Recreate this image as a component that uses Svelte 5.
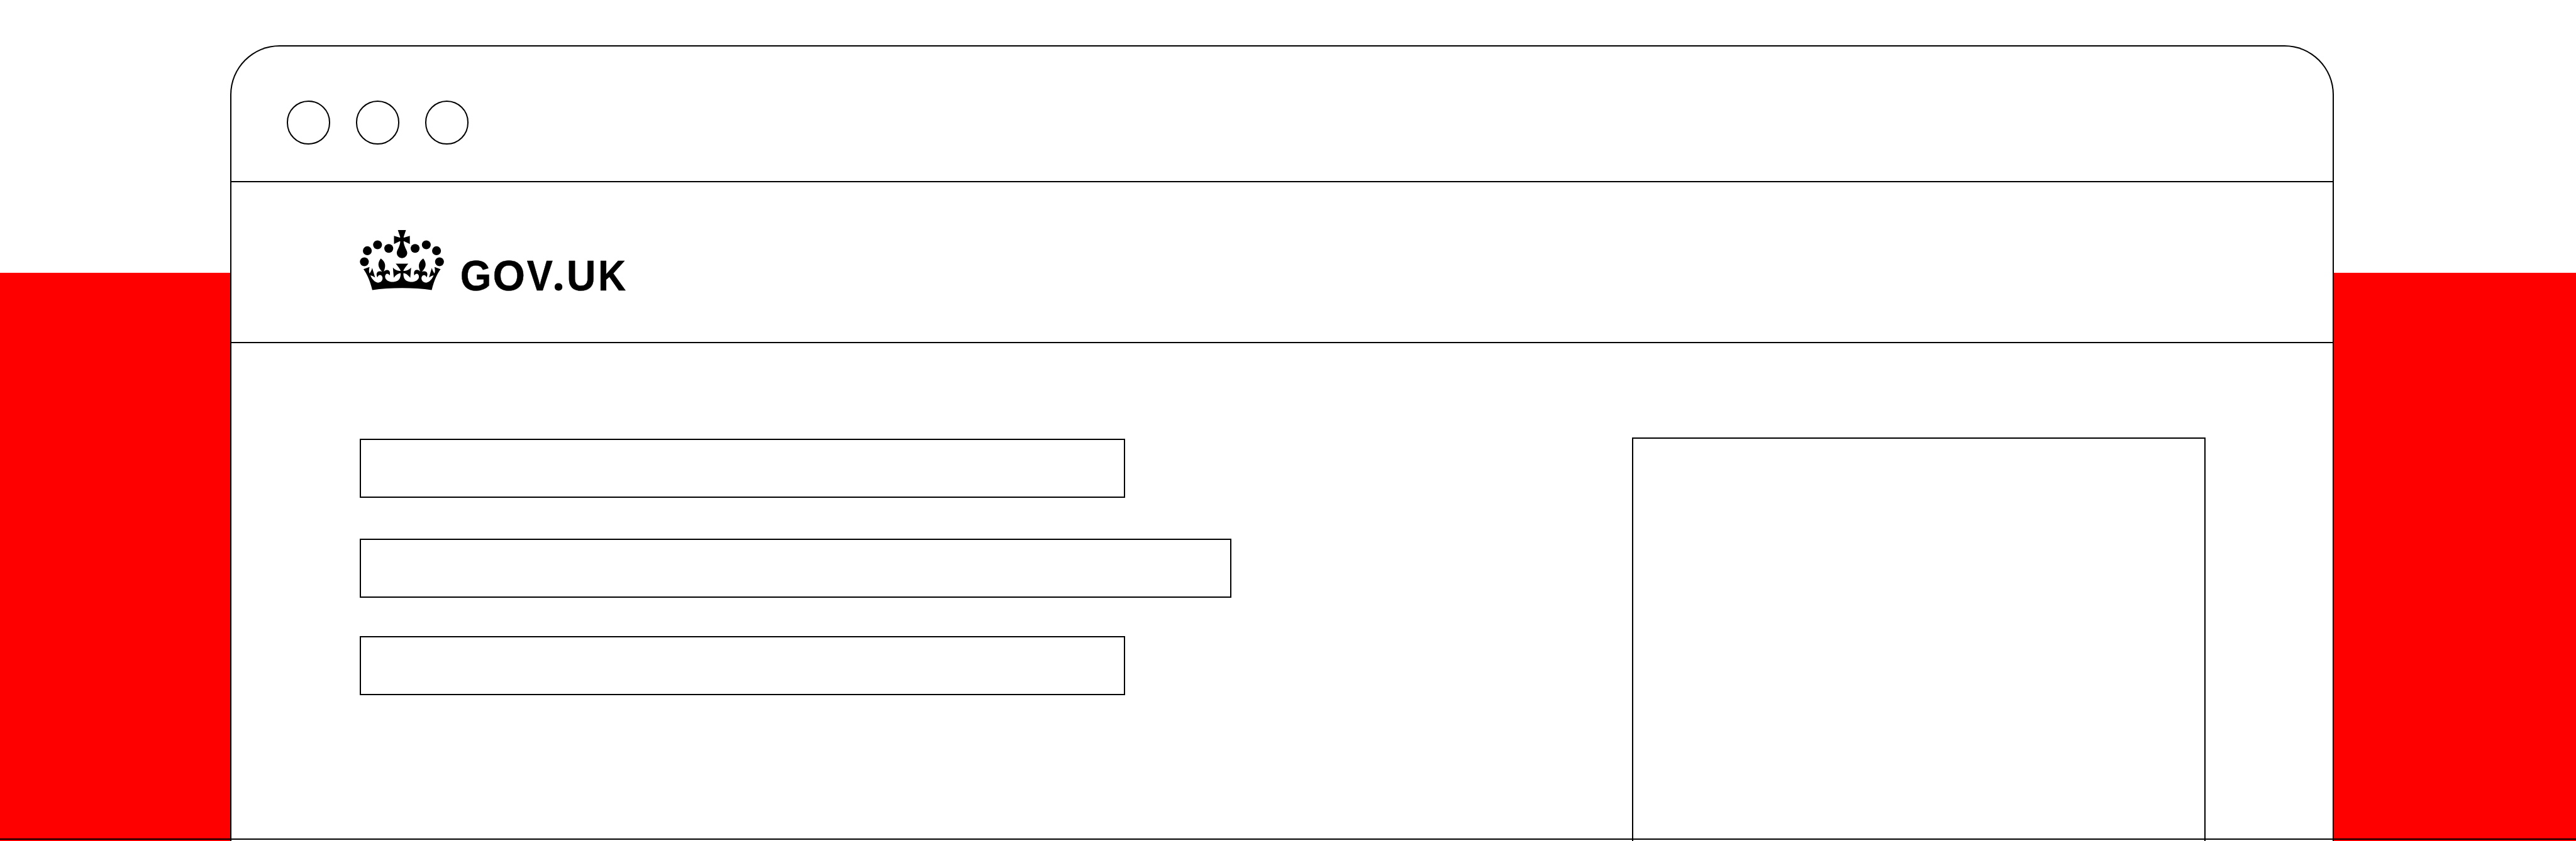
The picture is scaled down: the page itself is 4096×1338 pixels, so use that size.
<script>
  const dots = [0, 1, 2];
  const beads = [[51, 223], [69, 156], [131, 120], [199, 142], [359, 142], [427, 120], [489, 156], [507, 223]];
  const letters = [
    { ch: 'G', x: 930.9, k: 0.932 },
    { ch: 'O', x: 996.7, k: 0.965 },
    { ch: 'V', x: 1065.9, k: 0.9 },
    { ch: 'U', x: 1146.2, k: 0.94 },
    { ch: 'K', x: 1209.9, k: 0.89 }
  ];
</script>

<div class="viewport">
  <main class="scene">
    <section class="browser">
      <div class="chrome">
        {#each dots as d}<span class="dot"></span>{/each}
      </div>
      <header class="masthead">
        <svg class="logo" viewBox="720 460 560 140" role="img" aria-label="GOV.UK">
          <g transform="translate(720 455) scale(.33333)">
            {#each beads as [cx, cy]}<circle {cx} {cy} r="27" />{/each}
            <path transform="translate(46.9 30) scale(7.33 7.27)" d="M33,9.6l.4-.3 4.8,2.4v-6.8l-4.8,1.5-.4-.3 2-6.1h-6.7l2,6.1-.4.3-4.8-1.5v6.8l4.8-2.4.4.3c-.3,3.6-1.9,6-2.7,8.2c-.9,2.8,1.2,5.7,4.1,5.7c3,0,5.1-2.9,4.1-5.7c-.8-2.2-2.4-4.6-2.8-8.2Z" />
            <path transform="translate(45.5 -41) scale(7.36 7.27)" d="M37,37.9s-3.4,3.8-4.1,6.1c2.2,0,4.2-.5,6.4-2.8l-.7,8.5c-2-2.8-4.4-4.1-5.7-3.8.1,3.1.5,6.7,5.8,7.2,3.7.3,6.7-1.5,7-3.8.4-2.6-2-4.3-3.7-1.6-1.4-4.5,2.4-6.1,4.9-3.2-1.9-4.5-1.8-7.7,2.4-10.9,3,4,2.6,7.3-1.2,11.1,2.4-1.3,6.2,0,4,4.6-1.2-2.8-3.7-2.2-4.2.2-.3,1.7.7,3.7,3,4.2,1.9.3,4.7-.9,7-5.9-1.3,0-2.4.7-3.9,1.7l2.4-8c.6,2.3,1.4,3.7,2.2,4.5.6-1.6.5-2.8,0-5.3l5,1.8c-2.6,3.6-5.2,8.7-7.3,17.5-7.4-1.1-15.7-1.7-24.5-1.7h0c-8.8,0-17.1.6-24.5,1.7-2.1-8.8-4.7-13.9-7.3-17.5l5-1.8c-.5,2.5-.6,3.7,0,5.3.8-.8,1.6-2.3,2.2-4.5l2.4,8c-1.5-1-2.6-1.7-3.9-1.7,2.3,5,5.2,6.2,7,5.9,2.3-.4,3.3-2.4,3-4.2-.5-2.4-3-3.1-4.2-.2-2.2-4.6,1.6-6,4-4.6-3.7-3.7-4.2-7.1-1.2-11.1,4.2,3.2,4.3,6.4,2.4,10.9,2.5-2.8,6.3-1.3,4.9,3.2-1.8-2.7-4.1-1-3.7,1.6.3,2.3,3.3,4.1,7,3.8,5.4-.5,5.7-4.2,5.8-7.2-1.3-.2-3.7,1-5.7,3.8l-.7-8.5c2.2,2.3,4.2,2.7,6.4,2.8-.7-2.3-4.1-6.1-4.1-6.1h10.6Z" />
          </g>
          {#each letters.slice(0, 3) as l}
            <text class="letter" transform="translate({l.x} 587) scale({l.k} 1)">{l.ch}</text>
          {/each}
          <text class="point" x="1116.8" y="587">.</text>
          {#each letters.slice(3) as l}
            <text class="letter" transform="translate({l.x} 587) scale({l.k} 1)">{l.ch}</text>
          {/each}
        </svg>
      </header>
      <div class="content">
        <div class="bars">
          <div class="bar short"></div>
          <div class="bar long"></div>
          <div class="bar short"></div>
        </div>
        <div class="panel"></div>
      </div>
    </section>
    <div class="ground"></div>
  </main>
</div>

<style>
  :global(body) { margin: 0; background: #fff; }
  .viewport { width: 4096px; height: 1338px; overflow: hidden; }
  .scene {
    --line: 2.56px solid #000;
    box-sizing: border-box;
    position: relative;
    width: 5212px;
    height: 1703px;
    overflow: hidden;
    padding: 92px 490px 0 466px;
    zoom: .785879;
    background: linear-gradient(#fff 552px, #f00 552px);
  }
  .browser {
    box-sizing: border-box;
    height: 1611px;
    border: var(--line);
    border-bottom: 0;
    border-radius: 100px 100px 0 0;
    background: #fff;
    display: flex;
    flex-direction: column;
  }
  .chrome {
    box-sizing: border-box;
    height: 274px;
    flex: none;
    border-bottom: var(--line);
    padding: 109.5px 0 0 111.5px;
    display: flex;
    gap: 52px;
  }
  .dot { box-sizing: border-box; width: 88px; height: 88px; border: var(--line); border-radius: 50%; }
  .masthead { box-sizing: border-box; height: 326px; flex: none; border-bottom: var(--line); padding: 91.5px 0 0 251.5px; }
  .logo { display: block; width: 560px; height: 140px; overflow: visible; }
  .letter { font: bold 87.2px "Liberation Sans", Arial, sans-serif; stroke: #000; stroke-width: .6px; }
  .point { font: bold 92px "Open Sans", "Noto Sans", sans-serif; }
  .content { flex: 1; display: flex; justify-content: space-between; padding: 191.4px 257.5px 0 259.5px; }
  .bars { display: flex; flex-direction: column; padding-top: 2px; }
  .bar { box-sizing: border-box; height: 120px; border: var(--line); margin-bottom: 82px; }
  .long { margin-bottom: 78px; }
  .short { width: 1548px; }
  .long { width: 1764px; }
  .panel { box-sizing: border-box; width: 1160px; border: var(--line); border-bottom: 0; }
  .ground { position: absolute; left: 0; right: 0; bottom: 2.6px; height: 2.56px; background: #000; }
</style>
